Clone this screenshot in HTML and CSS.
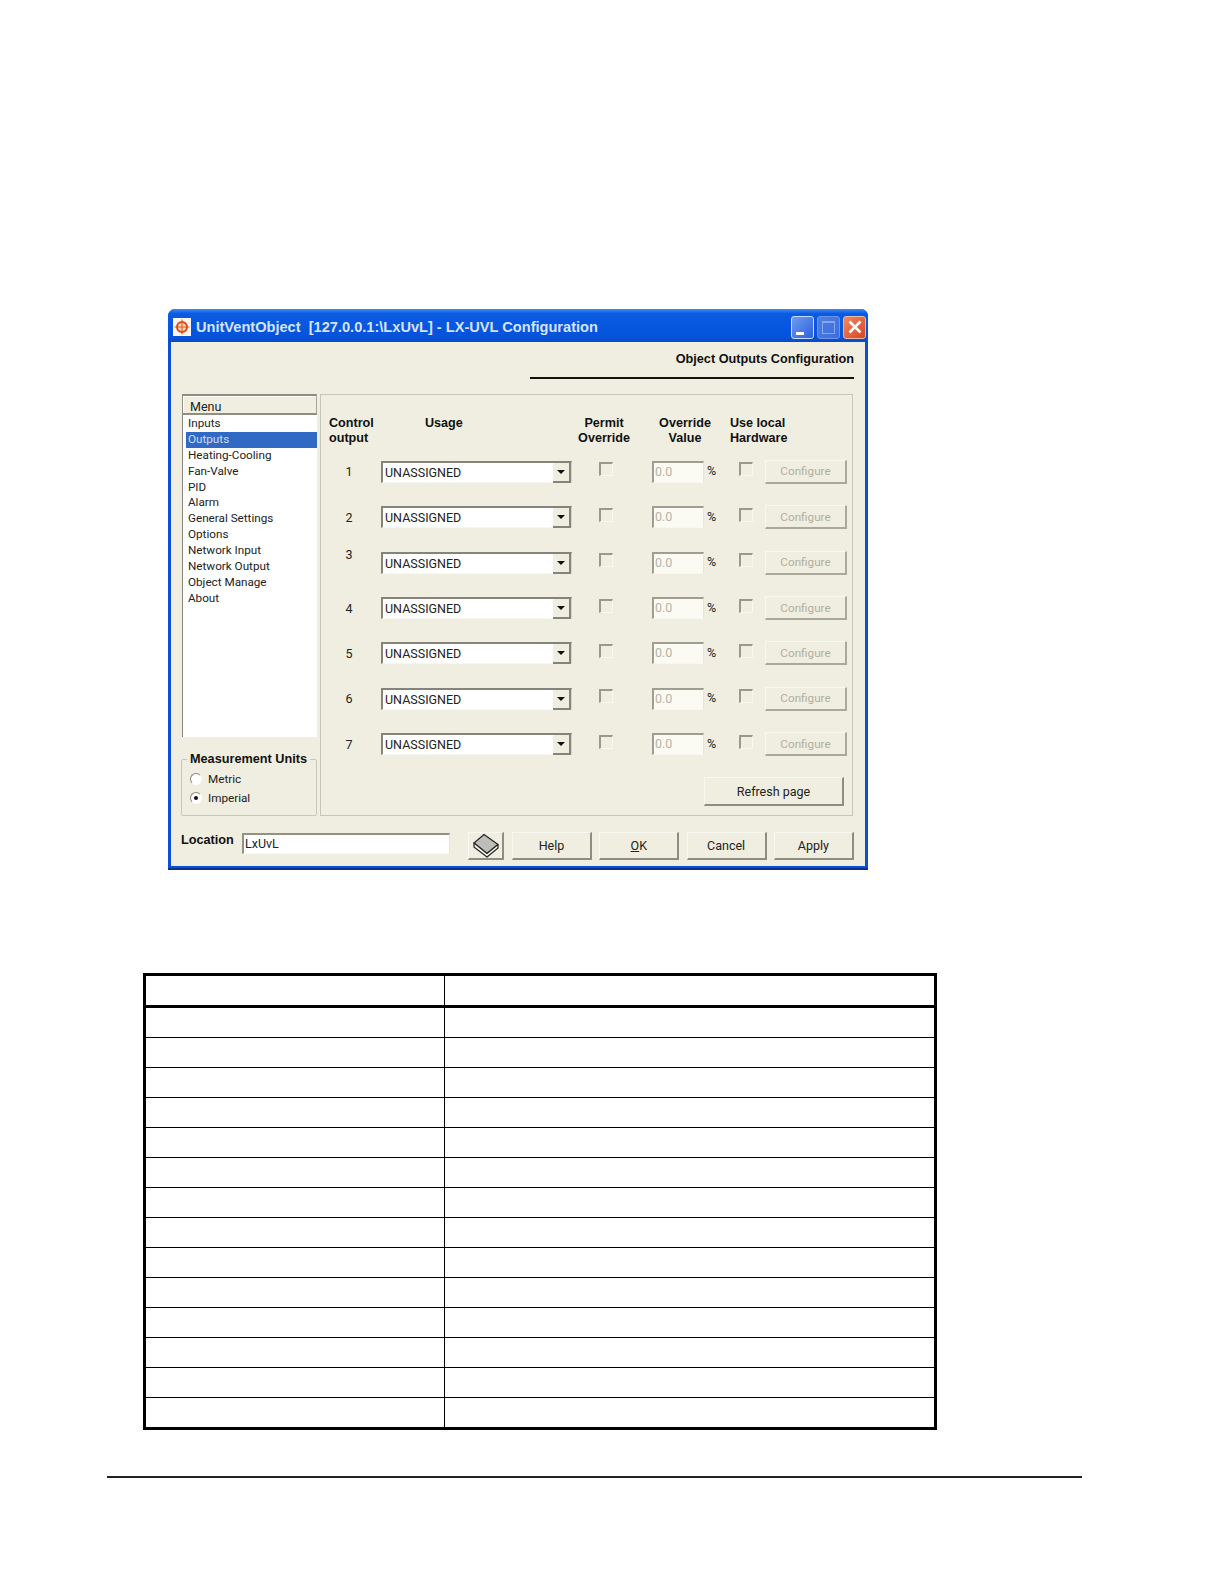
FILE: index.html
```html
<!DOCTYPE html>
<html lang="en">
<head>
    <meta charset="UTF-8">
    <title>LX-UVL Configuration</title>
    <link rel="stylesheet" href="styles.css">
</head>
<body>
    <div class="window">
        <div class="titlebar">
            <svg class="app-icon" width="18" height="18" viewBox="0 0 18 18">
                <rect width="18" height="18" fill="#fdf6f0"/>
                <circle cx="9" cy="9" r="5" fill="#f9d9b8" stroke="#d9470f" stroke-width="2"/>
                <path d="M9 1.5v15M1.5 9h15" stroke="#e2581f" stroke-width="1.1"/>
            </svg>
            <span class="title-text">UnitVentObject&nbsp; [127.0.0.1:\LxUvL] - LX-UVL Configuration</span>
            <div class="title-btn"><span class="min-mark"></span></div>
            <div class="title-btn disabled"><span class="max-mark"></span></div>
            <div class="title-btn close">
                <svg width="16" height="16" viewBox="0 0 16 16"><path d="M2.5 2.5l11 11M13.5 2.5l-11 11" stroke="#fff" stroke-width="2.6"/></svg>
            </div>
        </div>
        <div class="client">
            <div class="head">
                <div class="head-title">Object Outputs Configuration</div>
                <div class="head-line"></div>
            </div>
            <div class="main">
                <div class="side">
                    <div class="menu">
                        <div class="menu-head">Menu</div>
                        <ul class="menu-list">
                            <li>Inputs</li>
                            <li class="selected">Outputs</li>
                            <li>Heating-Cooling</li>
                            <li>Fan-Valve</li>
                            <li>PID</li>
                            <li>Alarm</li>
                            <li>General Settings</li>
                            <li>Options</li>
                            <li>Network Input</li>
                            <li>Network Output</li>
                            <li>Object Manage</li>
                            <li>About</li>
                        </ul>
                    </div>
                    <div class="units">
                        <div class="units-title">Measurement Units</div>
                        <div class="radio-row"><span class="radio"></span>Metric</div>
                        <div class="radio-row"><span class="radio checked"></span>Imperial</div>
                    </div>
                </div>
                <div class="panel">
                    <div class="cols">
                        <div class="col-control">Control<br>output</div>
                        <div class="col-usage">Usage</div>
                        <div class="col-center">Permit<br>Override</div>
                        <div class="col-center col-value">Override<br>Value</div>
                        <div>Use local<br>Hardware</div>
                    </div>
                    <div class="row">
                        <div class="num">1</div>
                        <div class="combo">UNASSIGNED<span class="arrow"></span></div>
                        <span class="check first"></span>
                        <div class="value">0.0</div>
                        <div class="pct">%</div>
                        <span class="check"></span>
                        <div class="btn off">Configure</div>
                    </div>
                    <div class="row">
                        <div class="num">2</div>
                        <div class="combo">UNASSIGNED<span class="arrow"></span></div>
                        <span class="check first"></span>
                        <div class="value">0.0</div>
                        <div class="pct">%</div>
                        <span class="check"></span>
                        <div class="btn off">Configure</div>
                    </div>
                    <div class="row">
                        <div class="num raised">3</div>
                        <div class="combo">UNASSIGNED<span class="arrow"></span></div>
                        <span class="check first"></span>
                        <div class="value">0.0</div>
                        <div class="pct">%</div>
                        <span class="check"></span>
                        <div class="btn off">Configure</div>
                    </div>
                    <div class="row">
                        <div class="num">4</div>
                        <div class="combo">UNASSIGNED<span class="arrow"></span></div>
                        <span class="check first"></span>
                        <div class="value">0.0</div>
                        <div class="pct">%</div>
                        <span class="check"></span>
                        <div class="btn off">Configure</div>
                    </div>
                    <div class="row">
                        <div class="num">5</div>
                        <div class="combo">UNASSIGNED<span class="arrow"></span></div>
                        <span class="check first"></span>
                        <div class="value">0.0</div>
                        <div class="pct">%</div>
                        <span class="check"></span>
                        <div class="btn off">Configure</div>
                    </div>
                    <div class="row">
                        <div class="num">6</div>
                        <div class="combo">UNASSIGNED<span class="arrow"></span></div>
                        <span class="check first"></span>
                        <div class="value">0.0</div>
                        <div class="pct">%</div>
                        <span class="check"></span>
                        <div class="btn off">Configure</div>
                    </div>
                    <div class="row">
                        <div class="num">7</div>
                        <div class="combo">UNASSIGNED<span class="arrow"></span></div>
                        <span class="check first"></span>
                        <div class="value">0.0</div>
                        <div class="pct">%</div>
                        <span class="check"></span>
                        <div class="btn off">Configure</div>
                    </div>
                    <div class="refresh-row">
                        <div class="btn refresh">Refresh page</div>
                    </div>
                </div>
            </div>
            <div class="bottom">
                <div class="loc-label">Location</div>
                <div class="loc-input">LxUvL</div>
                <div class="btn book">
                    <svg width="30" height="25" viewBox="0 0 30 25">
                        <path d="M3 10L13 1.500l14 10L16 20.500z" fill="#bdbdb9" stroke="#2a2a2a" stroke-width="1.3" stroke-linejoin="round"/>
                        <path d="M3 10v4l13 10 11-9v-3.500L16 20.500z" fill="#fafaf6" stroke="#2a2a2a" stroke-width="1.3" stroke-linejoin="round"/>
                    </svg>
                </div>
                <div class="btn action">Help</div>
                <div class="btn action"><u>O</u>K</div>
                <div class="btn action">Cancel</div>
                <div class="btn action">Apply</div>
            </div>
        </div>
    </div>

    <table class="blank-table">
        <thead>
            <tr><th></th><th></th></tr>
        </thead>
        <tbody>
            <tr><td></td><td></td></tr>
            <tr><td></td><td></td></tr>
            <tr><td></td><td></td></tr>
            <tr><td></td><td></td></tr>
            <tr><td></td><td></td></tr>
            <tr><td></td><td></td></tr>
            <tr><td></td><td></td></tr>
            <tr><td></td><td></td></tr>
            <tr><td></td><td></td></tr>
            <tr><td></td><td></td></tr>
            <tr><td></td><td></td></tr>
            <tr><td></td><td></td></tr>
            <tr><td></td><td></td></tr>
            <tr><td></td><td></td></tr>
        </tbody>
    </table>

    <div class="page-rule"></div>
</body>
</html>
```

FILE: styles.css
```css
body {
    margin: 0;
    padding-top: 309px;
    background-color: #fff;
    font-family: Roboto, "Liberation Sans", Arial, sans-serif;
    font-size: 12.5px;
    color: #222;
}
.window {
    width: 700px;
    height: 561px;
    margin-left: 168px;
    box-sizing: border-box;
    display: flex;
    flex-direction: column;
    background-color: #0a4fd6;
    border-bottom: 2px solid #0a2f8c;
    border-radius: 7px 7px 0 0;
    padding: 0 3px 2px;
}
.titlebar {
    height: 33px;
    flex: none;
    margin: 0 -3px;
    padding: 3px 2px 0 5px;
    box-sizing: border-box;
    display: flex;
    align-items: center;
    gap: 3px;
    border-radius: 7px 7px 0 0;
    background: linear-gradient(#3f8bf2 0, #0a5be2 14%, #0553dd 80%, #0a4bc8 100%);
}
.app-icon {
    margin-right: 2px;
    flex: none;
}
.title-text {
    flex: 1;
    font-family: "Liberation Sans", Arial, sans-serif;
    font-size: 14.6px;
    font-weight: bold;
    color: #d6e3fa;
}
.title-btn {
    width: 23px;
    height: 23px;
    box-sizing: border-box;
    display: flex;
    align-items: center;
    justify-content: center;
    position: relative;
    border: 1px solid #c9dafb;
    border-radius: 3px;
    background: linear-gradient(135deg, #6f9bf0, #2b62dd);
}
.title-btn.disabled {
    background: linear-gradient(135deg, #4f7fe4, #3a6ddf);
    border-color: #6d95e8;
}
.title-btn.close {
    border-color: #e8b8a8;
    background: linear-gradient(135deg, #ee8a66, #d8451c);
}
.min-mark {
    position: absolute;
    left: 4px;
    bottom: 3px;
    width: 8px;
    height: 3px;
    background-color: #fff;
}
.max-mark {
    width: 13px;
    height: 13px;
    box-sizing: border-box;
    border: 1px solid #88a8ea;
    border-top-width: 2px;
}
.client {
    flex: 1;
    padding: 0 11px 0 10px;
    background-color: #f0eee0;
}
.head {
    height: 52px;
    display: flex;
    flex-direction: column;
    align-items: flex-end;
}
.head-title {
    margin-top: 9px;
    font-family: "Liberation Sans", Arial, sans-serif;
    font-size: 12.7px;
    line-height: 16px;
    font-weight: bold;
    color: #111;
}
.head-line {
    width: 324px;
    height: 2px;
    margin-top: 10px;
    background-color: #111;
}
.main {
    display: flex;
    gap: 3px;
    height: 422px;
}
.side {
    width: 136px;
    display: flex;
    flex-direction: column;
}
.menu {
    height: 343px;
    box-sizing: border-box;
    padding-left: 1px;
    display: flex;
    flex-direction: column;
}
.menu-head {
    height: 21px;
    box-sizing: border-box;
    padding: 3px 0 0 7px;
    border: 1px solid #8f8d7f;
    border-top-width: 2px;
    border-bottom-width: 2px;
    border-right-color: #a8a698;
    line-height: 16px;
    box-shadow: inset 1px 1px 0 #fff;
}
.menu-list {
    flex: 1;
    margin: 0;
    padding: 1px 0 0 3px;
    list-style: none;
    font-size: 11.7px;
    background-color: #fff;
    border-left: 1px solid #85837a;
}
.menu-list li {
    line-height: 15.87px;
    padding-left: 2px;
}
.menu-list .selected {
    background-color: #316ac5;
    color: #cfdcf3;
}
.units {
    position: relative;
    height: 57px;
    margin-top: 22px;
    box-sizing: border-box;
    padding: 10px 0 0 8px;
    border: 1px solid #c8c6b6;
    border-radius: 2px;
}
.units-title {
    position: absolute;
    top: -8px;
    left: 5px;
    padding: 0 3px;
    font-family: "Liberation Sans", Arial, sans-serif;
    font-size: 12.7px;
    font-weight: bold;
    line-height: 15px;
    color: #111;
    background-color: #f0eee0;
}
.radio-row {
    height: 18.500px;
    display: flex;
    align-items: center;
    gap: 6px;
    font-size: 11.7px;
}
.radio {
    width: 12px;
    height: 12px;
    box-sizing: border-box;
    display: flex;
    align-items: center;
    justify-content: center;
    border: 1px solid #fff;
    border-top-color: #888678;
    border-left-color: #888678;
    border-radius: 50%;
    background-color: #fff;
}
.radio.checked::after {
    content: "";
    width: 4px;
    height: 4px;
    border-radius: 50%;
    background-color: #111;
}
.panel {
    width: 533px;
    box-sizing: border-box;
    border: 1px solid #c8c6b6;
    padding-top: 21px;
}
.cols {
    display: grid;
    grid-template-columns: 60px 191px 64px 94px 1fr;
    height: 33px;
    font-family: "Liberation Sans", Arial, sans-serif;
    font-size: 12.6px;
    font-weight: bold;
    line-height: 15px;
    color: #111;
}
.col-control {
    padding-left: 8px;
}
.col-usage {
    padding-left: 44px;
}
.col-center {
    text-align: center;
}
.col-value {
    padding-left: 4px;
}
.row {
    display: grid;
    grid-template-columns: 60px 191px 80px 52px 35px 26px 82px;
    align-items: center;
    height: 45.450px;
}
.num {
    text-align: center;
    padding-right: 4px;
}
.num.raised {
    margin-bottom: 16px;
}
.combo {
    height: 22px;
    box-sizing: border-box;
    position: relative;
    padding-left: 2px;
    line-height: 19px;
    border: 2px solid #85837a;
    border-right: 1px solid #d8d6c8;
    border-bottom: 1px solid #f8f7f0;
    background-color: #fff;
}
.arrow {
    position: absolute;
    right: 0;
    top: 0;
    width: 18px;
    height: 20px;
    background-color: #f0eee0;
    border-right: 2px solid #85837a;
    border-bottom: 2px solid #85837a;
    box-sizing: border-box;
}
.arrow::after {
    content: "";
    position: absolute;
    left: 4px;
    top: 7px;
    border: 4px solid transparent;
    border-top: 4px solid #111;
    border-bottom: 0;
}
.check {
    width: 14px;
    height: 14px;
    margin-bottom: 5px;
    box-sizing: border-box;
    border: 1px solid #f8f7f0;
    border-top: 2px solid #9b998b;
    border-left: 2px solid #9b998b;
    background-color: #f0eee0;
}
.check.first {
    margin-left: 27px;
}
.value {
    height: 22px;
    box-sizing: border-box;
    padding-left: 1px;
    line-height: 17px;
    border: 2px solid #a09e90;
    border-right: 1px solid #e8e6d8;
    border-bottom: 1px solid #f8f7f0;
    background-color: #fbfaf3;
    color: #b5b3a5;
}
.pct {
    padding-left: 3px;
    margin-bottom: 2px;
}
.btn {
    box-sizing: border-box;
    display: flex;
    align-items: center;
    justify-content: center;
    border: 1px solid #f8f7f0;
    border-right: 2px solid #8f8d7f;
    border-bottom: 2px solid #8f8d7f;
    background-color: #f0eee0;
}
.btn.off {
    height: 24px;
    font-size: 11.7px;
    border-right-color: #aaa898;
    border-bottom-color: #aaa898;
    color: #b0ae9f;
}
.refresh-row {
    display: flex;
    margin-top: 10px;
    padding-left: 383px;
}
.refresh {
    width: 140px;
    height: 29px;
}
.bottom {
    display: flex;
    align-items: flex-start;
    margin-top: 16px;
}
.loc-label {
    width: 61px;
    font-family: "Liberation Sans", Arial, sans-serif;
    font-size: 12.7px;
    font-weight: bold;
    line-height: 15px;
    color: #111;
    margin-top: 1px;
}
.loc-input {
    width: 208px;
    height: 21px;
    box-sizing: border-box;
    margin-top: 1px;
    padding-left: 1px;
    line-height: 18px;
    border: 2px solid #94927f;
    border-right: 1px solid #e8e6d8;
    border-bottom: 1px solid #f8f7f0;
    background-color: #fff;
}
.book {
    width: 36px;
    height: 28px;
    margin: 0 8px 0 18px;
}
.action {
    width: 80px;
    height: 28px;
    margin-right: 7.300px;
}
.action:last-child {
    margin-right: 0;
}
.blank-table {
    width: 794px;
    margin: 103px 0 0 143px;
    border-collapse: collapse;
    table-layout: fixed;
    border: 3px solid #000;
}
.blank-table th {
    height: 29px;
    padding: 0;
    border-bottom: 3px solid #000;
    border-right: 1.500px solid #000;
}
.blank-table th:first-child {
    width: 298px;
}
.blank-table td {
    height: 29px;
    padding: 0;
    border-bottom: 1.500px solid #000;
    border-right: 1.500px solid #000;
}
.page-rule {
    width: 975px;
    height: 2px;
    margin: 46px 0 0 107px;
    background-color: #222;
}
```
